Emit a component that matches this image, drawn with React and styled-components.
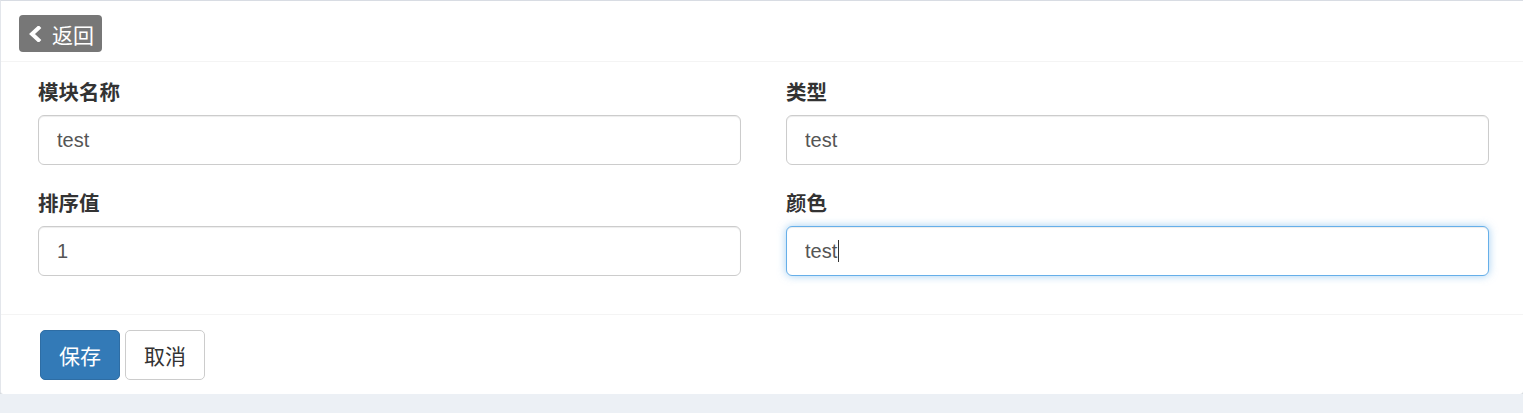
import React from "react";
import styled, { createGlobalStyle, css } from "styled-components";

const Global = createGlobalStyle`
  html, body { margin: 0; padding: 0; background: #ecf0f5; overflow: hidden; }
  body { font-family: "Liberation Sans", "Noto Sans CJK SC", Arial, sans-serif; color: #333; }
  * { box-sizing: border-box; }
`;

const Box = styled.div`
  background: #fff;
  border-top: 1px solid #d8dce3;
  border-left: 1px solid #e3e6eb;
  box-shadow: 0 1px 2px rgba(0, 0, 0, 0.18);
  border-radius: 0 0 3px 3px;
`;

const Header = styled.div`
  padding: 14px 18px 9px;
  border-bottom: 1px solid #f4f4f4;
  display: flex;
`;

const BackButton = styled.button`
  display: inline-flex;
  align-items: center;
  gap: 10px;
  height: 37px;
  padding: 0 8px 0 9px;
  background: #777;
  color: #fff;
  border: none;
  border-radius: 4px;
  font-family: "Liberation Sans", "Noto Sans CJK SC", sans-serif;
  font-size: 21px;
  cursor: pointer;
`;

const Chevron = styled.svg`
  width: 14px;
  height: 16px;
  display: block;
`;

const Body = styled.div`
  display: grid;
  grid-template-columns: 1fr 1fr;
  column-gap: 45px;
  padding: 18px 34px 12px 37px;
`;

const Group = styled.div`
  margin-bottom: 26px;
  position: relative;
`;

const Label = styled.label`
  display: block;
  font-family: "Liberation Sans", "Noto Sans CJK SC", sans-serif;
  font-weight: 700;
  font-size: 20.5px;
  line-height: 26px;
  margin-bottom: 9px;
  color: #333;
`;

const Input = styled.input`
  display: block;
  width: 100%;
  height: 50px;
  padding: 0 18px;
  font-family: "Liberation Sans", "Noto Sans CJK SC", sans-serif;
  font-size: 20px;
  color: #555;
  background: #fff;
  border: 1px solid #ccc;
  border-radius: 6px;
  box-shadow: inset 0 1px 1px rgba(0, 0, 0, 0.075);
  outline: none;
  caret-color: transparent;
  ${(p) =>
    p.$focused &&
    css`
      border-color: #66afe9;
      box-shadow: inset 0 1px 1px rgba(0, 0, 0, 0.075), 0 0 8px rgba(102, 175, 233, 0.6);
    `}
`;

const Caret = styled.span`
  position: absolute;
  left: 52px;
  bottom: 14px;
  width: 1px;
  height: 22px;
  background: #333;
`;

const Footer = styled.div`
  border-top: 1px solid #f4f4f4;
  padding: 15px 39px 14px;
  display: flex;
  gap: 5px;
`;

const Button = styled.button`
  height: 50px;
  width: 80px;
  padding: 0;
  font-family: "Liberation Sans", "Noto Sans CJK SC", sans-serif;
  font-size: 21px;
  border-radius: 5px;
  cursor: pointer;
  ${(p) =>
    p.$primary
      ? css`
          background: #337ab7;
          border: 1px solid #2e6da4;
          color: #fff;
        `
      : css`
          background: #fff;
          border: 1px solid #ccc;
          color: #333;
        `}
`;

const fields = [
  { label: "模块名称", value: "test" },
  { label: "类型", value: "test" },
  { label: "排序值", value: "1" },
  { label: "颜色", value: "test", focused: true },
];

export default function App() {
  return (
    <>
      <Global />
      <Box>
        <Header>
          <BackButton>
            <Chevron viewBox="0 0 14 16">
              <polyline
                points="10.5,2 4,8 10.5,14"
                fill="none"
                stroke="#fff"
                strokeWidth="4"
                strokeLinecap="square"
                strokeLinejoin="miter"
              />
            </Chevron>
            返回
          </BackButton>
        </Header>
        <Body>
          {fields.map((f) => (
            <Group key={f.label}>
              <Label>{f.label}</Label>
              <Input readOnly defaultValue={f.value} $focused={f.focused} />
              {f.focused && <Caret />}
            </Group>
          ))}
        </Body>
        <Footer>
          <Button $primary>保存</Button>
          <Button>取消</Button>
        </Footer>
      </Box>
    </>
  );
}
